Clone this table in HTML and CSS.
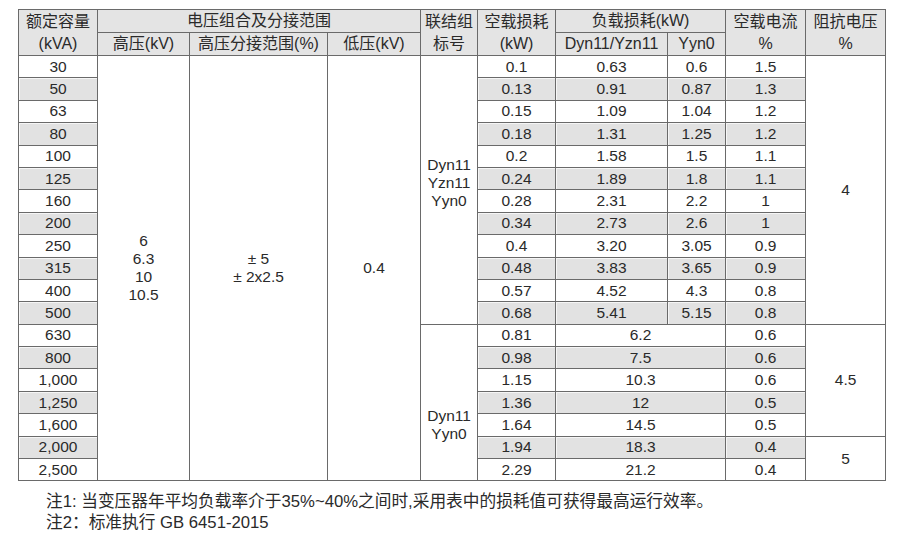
FILE: index.html
```html
<!DOCTYPE html>
<html lang="zh">
<head>
<meta charset="utf-8">
<title>变压器参数表</title>
<link rel="stylesheet" href="styles.css">
</head>
<body>
<div class="page">
<table class="spec">
  <colgroup>
    <col class="c1"><col class="c2"><col class="c3"><col class="c4"><col class="c5">
    <col class="c6"><col class="c7"><col class="c8"><col class="c9"><col class="c10">
  </colgroup>
  <thead>
    <tr class="h1">
      <th rowspan="2">额定容量<br>(kVA)</th>
      <th colspan="3">电压组合及分接范围</th>
      <th rowspan="2">联结组<br>标号</th>
      <th rowspan="2">空载损耗<br>(kW)</th>
      <th colspan="2">负载损耗(kW)</th>
      <th rowspan="2">空载电流<br>%</th>
      <th rowspan="2">阻抗电压<br>%</th>
    </tr>
    <tr class="h2">
      <th>高压(kV)</th>
      <th>高压分接范围(%)</th>
      <th>低压(kV)</th>
      <th>Dyn11/Yzn11</th>
      <th>Yyn0</th>
    </tr>
  </thead>
  <tbody>
    <tr><td>30</td><td rowspan="19" class="merge">6<br>6.3<br>10<br>10.5</td><td rowspan="19" class="merge">± 5<br>± 2x2.5</td><td rowspan="19" class="merge">0.4</td><td rowspan="12" class="merge grp1">Dyn11<br>Yzn11<br>Yyn0</td><td>0.1</td><td>0.63</td><td>0.6</td><td>1.5</td><td rowspan="12" class="merge">4</td></tr>
    <tr class="alt"><td>50</td><td>0.13</td><td>0.91</td><td>0.87</td><td>1.3</td></tr>
    <tr><td>63</td><td>0.15</td><td>1.09</td><td>1.04</td><td>1.2</td></tr>
    <tr class="alt"><td>80</td><td>0.18</td><td>1.31</td><td>1.25</td><td>1.2</td></tr>
    <tr><td>100</td><td>0.2</td><td>1.58</td><td>1.5</td><td>1.1</td></tr>
    <tr class="alt"><td>125</td><td>0.24</td><td>1.89</td><td>1.8</td><td>1.1</td></tr>
    <tr><td>160</td><td>0.28</td><td>2.31</td><td>2.2</td><td>1</td></tr>
    <tr class="alt"><td>200</td><td>0.34</td><td>2.73</td><td>2.6</td><td>1</td></tr>
    <tr><td>250</td><td>0.4</td><td>3.20</td><td>3.05</td><td>0.9</td></tr>
    <tr class="alt"><td>315</td><td>0.48</td><td>3.83</td><td>3.65</td><td>0.9</td></tr>
    <tr><td>400</td><td>0.57</td><td>4.52</td><td>4.3</td><td>0.8</td></tr>
    <tr class="alt"><td>500</td><td>0.68</td><td>5.41</td><td>5.15</td><td>0.8</td></tr>
    <tr><td>630</td><td rowspan="7" class="merge grp2">Dyn11<br>Yyn0</td><td>0.81</td><td colspan="2">6.2</td><td>0.6</td><td rowspan="5" class="merge">4.5</td></tr>
    <tr class="alt"><td>800</td><td>0.98</td><td colspan="2">7.5</td><td>0.6</td></tr>
    <tr><td>1,000</td><td>1.15</td><td colspan="2">10.3</td><td>0.6</td></tr>
    <tr class="alt"><td>1,250</td><td>1.36</td><td colspan="2">12</td><td>0.5</td></tr>
    <tr><td>1,600</td><td>1.64</td><td colspan="2">14.5</td><td>0.5</td></tr>
    <tr class="alt"><td>2,000</td><td>1.94</td><td colspan="2">18.3</td><td>0.4</td><td rowspan="2" class="merge">5</td></tr>
    <tr><td>2,500</td><td>2.29</td><td colspan="2">21.2</td><td>0.4</td></tr>
  </tbody>
</table>
<div class="notes">
  <p>注1: 当变压器年平均负载率介于35%~40%之间时,采用表中的损耗值可获得最高运行效率。</p>
  <p>注2：标准执行 GB 6451-2015</p>
</div>
</div>
</body>
</html>
```
FILE: styles.css
```css
html, body {
  margin: 0;
  padding: 0;
  background: #ffffff;
}
.page {
  padding: 9px 0 0 18px;
  font-family: "Liberation Sans", "Noto Sans CJK SC", sans-serif;
  color: #2a2a2a;
}
.spec {
  border-collapse: collapse;
  table-layout: fixed;
  width: 867px;
  font-size: 15.5px;
}
.c1 { width: 79px; }
.c2 { width: 92px; }
.c3 { width: 138px; }
.c4 { width: 93px; }
.c5 { width: 57px; }
.c6 { width: 78px; }
.c7 { width: 112px; }
.c8 { width: 58px; }
.c9 { width: 80px; }
.c10 { width: 80px; }
.spec th, .spec td {
  border: 1px solid #6a6a6a;
  padding: 0;
  text-align: center;
  vertical-align: middle;
}
.spec th {
  background: #e4e4e4;
  font-weight: normal;
  font-size: 16px;
  line-height: 22px;
  color: #2a2a2a;
}
.h1 { height: 23px; }
.h2 { height: 22px; }
.spec tbody tr { height: 22.4px; }
.spec td {
  line-height: 18px;
}
.spec tbody tr.alt td {
  background: #e2e2e2;
  box-shadow: inset 1px 1px 0 #f6f6f6;
}
.spec tbody tr.alt td.merge {
  background: #ffffff;
  box-shadow: none;
}
.spec td.grp1 {
  padding-bottom: 14px;
}
.spec td.grp2 {
  padding-top: 44px;
}
.notes {
  padding: 10px 0 0 28px;
  font-size: 16.7px;
  line-height: 21px;
  color: #2a2a2a;
}
.notes p {
  margin: 0;
}
```
